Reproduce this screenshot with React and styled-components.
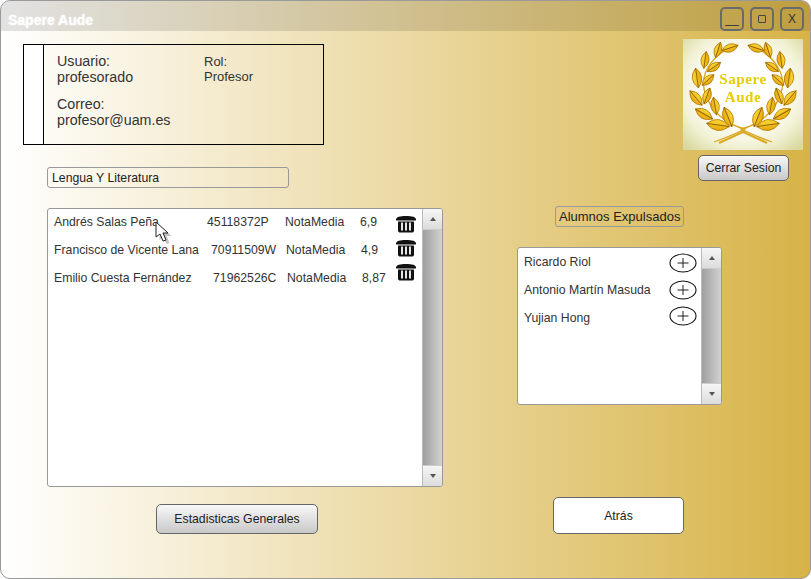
import styled, { createGlobalStyle } from "styled-components";

const Global = createGlobalStyle`
  html, body { margin: 0; background: #fff; }
  * { box-sizing: border-box; }
`;

const Window = styled.div`
  position: relative;
  width: 811px;
  height: 579px;
  overflow: hidden;
  border: 1px solid #9a9a9a;
  border-radius: 10px;
  background: linear-gradient(to right, #fff, #d7b347);
  font-family: "Liberation Sans", Arial, sans-serif;
  color: #333;
`;
const TitleBar = styled.div`
  height: 30px;
  padding: 6px 6px 0 7px;
  display: flex;
  justify-content: space-between;
  background: rgba(0, 0, 0, 0.115);
`;
const Title = styled.span`
  font-size: 14px;
  font-weight: bold;
  line-height: 27px;
  color: #fff;
  text-shadow: 0 0 2px rgba(255, 255, 255, 0.8);
`;
const WinButtons = styled.div`
  display: flex;
  gap: 6px;
`;
const WinButton = styled.div`
  width: 24px;
  height: 24px;
  border: 2px solid #6a6a6a;
  border-radius: 5px;
  display: flex;
  align-items: center;
  justify-content: center;
  font-size: 12px;
  color: #333;
`;
const Square = styled.div`
  width: 8px;
  height: 8px;
  border: 1px solid #444;
  border-radius: 1px;
`;
const Body = styled.div`
  display: flex;
`;
const LeftCol = styled.div`
  width: 516px;
  padding-left: 22px;
  display: flex;
  flex-direction: column;
  align-items: flex-start;
`;
const RightCol = styled.div`
  width: 293px;
  display: flex;
  flex-direction: column;
  align-items: flex-start;
`;
const InfoBox = styled.div`
  margin-top: 13px;
  width: 301px;
  height: 101px;
  border: 1px solid #000;
  display: flex;
`;
const Strip = styled.div`
  width: 20px;
  background: #fff;
  border-right: 1px solid #000;
`;
const InfoText = styled.div`
  padding: 8px 0 0 13px;
  width: 160px;
  font-size: 14.25px;
  line-height: 16px;
`;
const InfoBlock = styled.div`
  margin-bottom: 11px;
`;
const RolText = styled.div`
  padding-top: 9px;
  font-size: 13px;
  line-height: 15px;
`;
const FieldLabel = styled.div`
  height: 21px;
  width: ${(p) => p.$w}px;
  margin: ${(p) => p.$m};
  padding: 0 ${(p) => p.$px || 4}px;
  border: 1px solid #999;
  border-radius: 3px;
  font-size: ${(p) => p.$fs || 12.25}px;
  line-height: 20px;
  color: #222;
  white-space: nowrap;
`;
const ListBox = styled.div`
  width: ${(p) => p.$w}px;
  height: ${(p) => p.$h}px;
  margin: ${(p) => p.$m};
  display: flex;
  background: #fff;
  border: 1px solid #999;
  border-radius: 3px;
  overflow: hidden;
`;
const ListContent = styled.div`
  flex: 1;
  display: flex;
  justify-content: space-between;
`;
const Rows = styled.div`
  padding: ${(p) => p.$top || 0}px 0 0 6px;
`;
const Row = styled.div`
  display: flex;
  height: 28px;
  align-items: center;
  font-size: 12.25px;
  white-space: nowrap;
  position: relative;
  top: -1px;
`;
const Cell = styled.span`
  display: block;
  width: ${(p) => p.$w}px;
`;
const IconCol = styled.div`
  display: flex;
  flex-direction: column;
  gap: ${(p) => p.$gap}px;
  padding: ${(p) => p.$pad};
`;
const Scrollbar = styled.div`
  width: 20px;
  flex: none;
  display: flex;
  flex-direction: column;
  border-left: 1px solid #bbb;
`;
const ScrollButton = styled.div`
  height: 20px;
  flex: none;
  display: flex;
  align-items: center;
  justify-content: center;
  background: linear-gradient(#f6f6f6, #dcdcdc);
`;
const Arrow = styled.div`
  width: 0;
  height: 0;
  border-left: 3px solid transparent;
  border-right: 3px solid transparent;
  border-${(p) => (p.$up ? "bottom" : "top")}: 4px solid #555;
`;
const Thumb = styled.div`
  flex: 1;
  background: linear-gradient(to right, #9f9f9f, #d2d2d2);
  border-top: 1px solid #ccc;
  border-bottom: 1px solid #ccc;
`;
const GrayButton = styled.div`
  width: ${(p) => p.$w}px;
  height: ${(p) => p.$h}px;
  margin: ${(p) => p.$m};
  display: flex;
  align-items: center;
  justify-content: center;
  font-size: 12.25px;
  color: #222;
  border: 1px solid #666;
  border-radius: 5px;
  background: ${(p) => (p.$plain ? "#fff" : "linear-gradient(#f8f8f8, #c8c8c8)")};
`;
const LogoFrame = styled.svg`
  display: block;
  margin: 8px 0 0 166px;
`;
const Cursor = styled.svg`
  position: absolute;
  left: 154px;
  top: 220px;
`;

const Trash = () => (
  <svg width="22" height="18" viewBox="0 0 22 18">
    <path d="M1 4.5C1 2 5 1 11 1s10 1 10 3.5v1H1z" fill="#111" />
    <path d="M3 6.5h16v9c0 1.4-1 2-2 2H5c-1 0-2-.6-2-2z" fill="#111" />
    <path d="M7 7.5v8M11 7.5v8M15 7.5v8" stroke="#fff" strokeWidth="1.8" />
  </svg>
);

const Plus = () => (
  <svg width="28" height="20" viewBox="0 0 28 20">
    <ellipse cx="14" cy="10" rx="13" ry="9" fill="#fff" stroke="#111" strokeWidth="1.1" />
    <path d="M8.5 10h11M14 5v10" stroke="#222" strokeWidth="1" />
  </svg>
);

const leaves = [
  [35, 11, 16, -72],
  [47, 9, 17, -18],
  [22, 21, 17, -82],
  [31, 28, 16, -35],
  [14, 39, 20, -98],
  [25, 41, 16, -42],
  [24, 57, 17, -70],
  [13, 59, 19, 50],
  [32, 67, 18, 80],
  [21, 75, 20, 30],
  [45, 78, 21, 68],
  [35, 86, 23, 8],
];

const Branch = () => (
  <g>
    <path d="M31 103C42 99 52 95 62 90C44 86 26 72 21 50C18 34 28 20 44 10" fill="none" stroke="#d8a41c" strokeWidth="1.3" />
    <path d="M36 104L62 92" stroke="#dcaa28" strokeWidth="2.4" />
    {leaves.map(([x, y, len, a]) => (
      <g key={`${x}-${y}`} transform={`translate(${x} ${y}) rotate(${a})`}>
        <path d={`M${-len / 2} 0Q0 ${-len / 2.1} ${len / 2} 0Q0 ${len / 2.1} ${-len / 2} 0z`} fill="url(#leaf)" stroke="#b27c08" strokeWidth="0.8" />
        <path d={`M${-len / 2} 0L${len / 2} 0`} stroke="#946204" strokeWidth="0.9" />
      </g>
    ))}
  </g>
);

const Logo = () => (
  <LogoFrame width="120" height="111" viewBox="0 0 120 111">
    <defs>
      <radialGradient id="glow" cx="50%" cy="45%" r="70%">
        <stop offset="0.45" stopColor="#fff" />
        <stop offset="0.75" stopColor="#f1f1d4" />
        <stop offset="1" stopColor="#d9d99f" />
      </radialGradient>
      <linearGradient id="leaf" x1="0" y1="0" x2="0" y2="1">
        <stop offset="0" stopColor="#fbd93a" />
        <stop offset="1" stopColor="#e6a608" />
      </linearGradient>
      <filter id="soft">
        <feGaussianBlur stdDeviation="0.35" />
      </filter>
    </defs>
    <rect width="120" height="111" fill="url(#glow)" />
    <g filter="url(#soft)">
      <Branch />
      <g transform="translate(120 0) scale(-1 1)">
        <Branch />
      </g>
      <text x="60" y="45" textAnchor="middle" fontFamily="'Liberation Serif', serif" fontWeight="bold" fontSize="15" fill="#e8cc00" letterSpacing="0.6">
        Sapere
      </text>
      <text x="60" y="63" textAnchor="middle" fontFamily="'Liberation Serif', serif" fontWeight="bold" fontSize="15" fill="#e8cc00" letterSpacing="0.6">
        Aude
      </text>
    </g>
  </LogoFrame>
);

const ScrollColumn = () => (
  <Scrollbar>
    <ScrollButton>
      <Arrow $up />
    </ScrollButton>
    <Thumb />
    <ScrollButton>
      <Arrow />
    </ScrollButton>
  </Scrollbar>
);

const students = [
  { name: "Andrés Salas Peña", id: "45118372P", mark: "6,9", w: [153, 78, 75] },
  { name: "Francisco de Vicente Lana", id: "70911509W", mark: "4,9", w: [157, 75, 75] },
  { name: "Emilio Cuesta Fernández", id: "71962526C", mark: "8,87", w: [159, 74, 75] },
];
const expelled = ["Ricardo Riol", "Antonio Martín Masuda", "Yujian Hong"];

export default function App() {
  return (
    <>
      <Global />
      <Window>
        <TitleBar>
          <Title>Sapere Aude</Title>
          <WinButtons>
            <WinButton>__</WinButton>
            <WinButton>
              <Square />
            </WinButton>
            <WinButton>X</WinButton>
          </WinButtons>
        </TitleBar>
        <Body>
          <LeftCol>
            <InfoBox>
              <Strip />
              <InfoText>
                <InfoBlock>
                  Usuario:
                  <br />
                  profesorado
                </InfoBlock>
                <InfoBlock>
                  Correo:
                  <br />
                  profesor@uam.es
                </InfoBlock>
              </InfoText>
              <RolText>
                Rol:
                <br />
                Profesor
              </RolText>
            </InfoBox>
            <FieldLabel $w={242} $m="22px 0 0 24px">
              Lengua Y Literatura
            </FieldLabel>
            <ListBox $w={396} $h={279} $m="20px 0 0 24px">
              <ListContent>
                <Rows>
                  {students.map((s) => (
                    <Row key={s.id}>
                      <Cell $w={s.w[0]}>{s.name}</Cell>
                      <Cell $w={s.w[1]}>{s.id}</Cell>
                      <Cell $w={s.w[2]}>NotaMedia</Cell>
                      <Cell>{s.mark}</Cell>
                    </Row>
                  ))}
                </Rows>
                <IconCol $gap={6} $pad="6px 5px 0 0">
                  <Trash />
                  <Trash />
                  <Trash />
                </IconCol>
              </ListContent>
              <ScrollColumn />
            </ListBox>
            <GrayButton $w={162} $h={30} $m="17px 0 0 133px">
              Estadisticas Generales
            </GrayButton>
          </LeftCol>
          <RightCol>
            <Logo />
            <GrayButton $w={91} $h={26} $m="5px 0 0 181px">
              Cerrar Sesion
            </GrayButton>
            <FieldLabel $w={129} $fs={13} $px={3} $m="25px 0 0 38px">
              Alumnos Expulsados
            </FieldLabel>
            <ListBox $w={205} $h={158} $m="20px 0 0 0">
              <ListContent>
                <Rows $top={1}>
                  {expelled.map((n) => (
                    <Row key={n}>{n}</Row>
                  ))}
                </Rows>
                <IconCol $gap={6.5} $pad="5px 4px 0 0">
                  <Plus />
                  <Plus />
                  <Plus />
                </IconCol>
              </ListContent>
              <ScrollColumn />
            </ListBox>
            <GrayButton $plain $w={131} $h={37} $m="92px 0 0 36px">
              Atrás
            </GrayButton>
          </RightCol>
        </Body>
        <Cursor width="18" height="26" viewBox="0 0 18 26">
          <path d="M3 3l0 15 4-3 3 7 3-1-3-7 5 0z" fill="#777" opacity="0.45" transform="translate(1.5 1)" />
          <path d="M1 1l0 15 4-3 3 7 3-1-3-7 5 0z" fill="#fff" stroke="#222" strokeWidth="1" />
        </Cursor>
      </Window>
    </>
  );
}
